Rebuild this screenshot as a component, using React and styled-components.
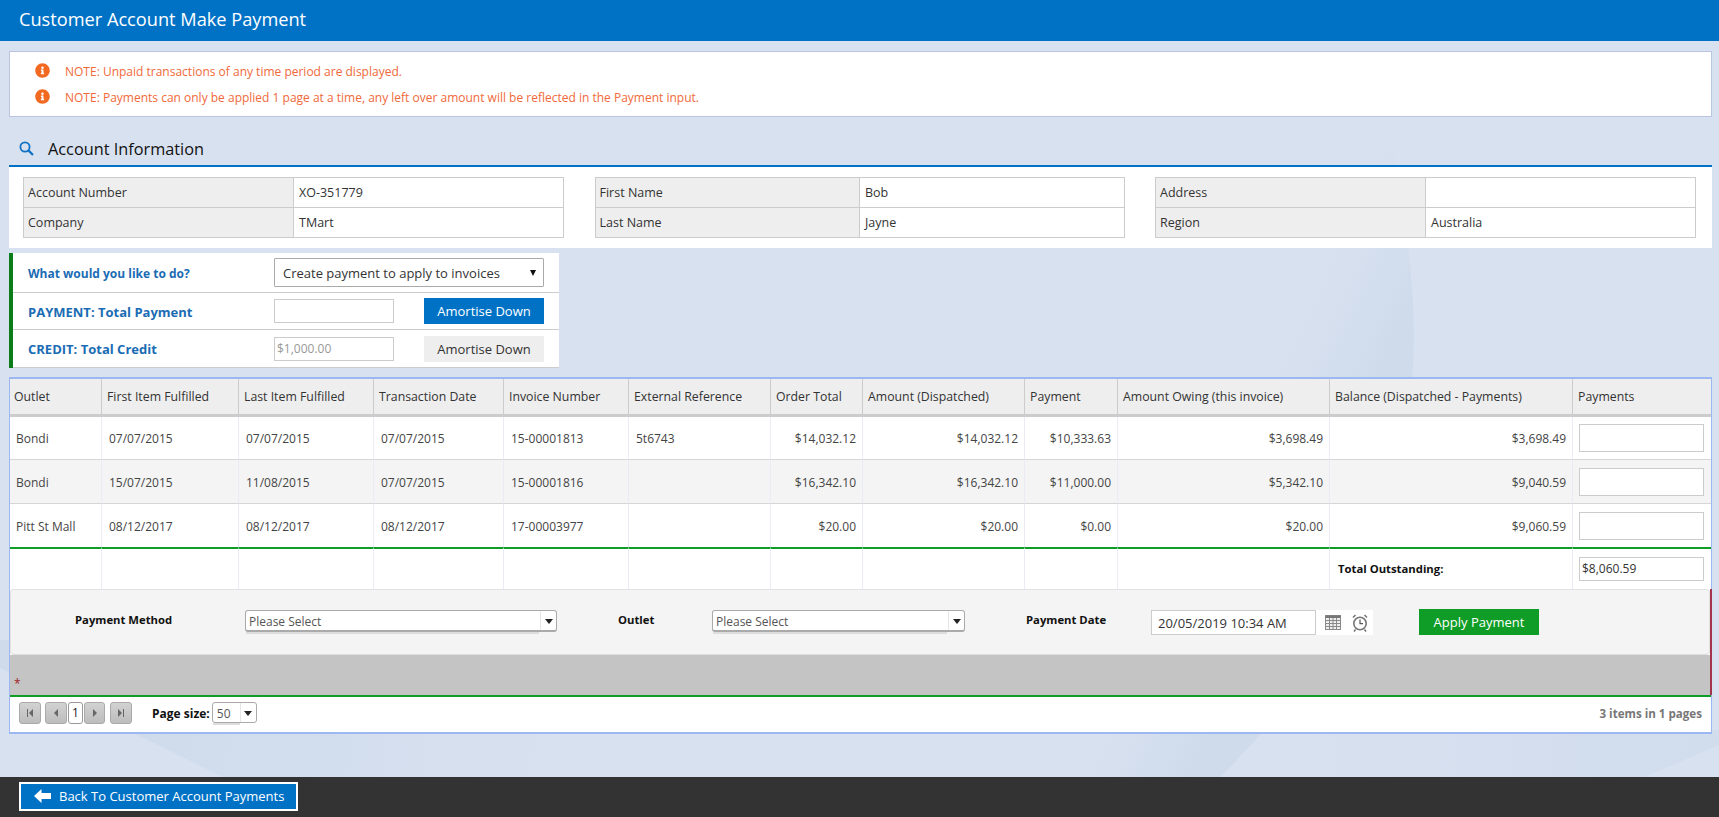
import React from "react";
import styled, { createGlobalStyle } from "styled-components";
import { FaInfoCircle } from "react-icons/fa";

const Global = createGlobalStyle`
  html, body { margin: 0; padding: 0; height: 100%; }
  body { font-family: "Open Sans", "Liberation Sans", sans-serif; font-size: 12px; color: #333; background: #d8e1f0; overflow: hidden; }
  * { box-sizing: border-box; }
`;

const Page = styled.div`position: relative; height: 817px; display: flex; flex-direction: column; isolation: isolate;`;
const Backdrop = styled.svg`position: absolute; left: 0; top: 0; z-index: -1;`;
const Header = styled.header`
  height: 41px; flex: none; background: #0072c6; color: #fff; font-size: 18.2px; line-height: 39px; padding-left: 19px;
`;
const Main = styled.main`flex: 1; padding: 10px 7px 0 9px; min-height: 0;`;

const Notes = styled.div`
  height: 66px; background: #fff; border: 1px solid #b9c5e2; padding: 6px 0 0 25px; display: flex; flex-direction: column;
`;
const Note = styled.div`
  height: 26px; display: flex; align-items: center; gap: 15px; color: #f0693a; font-size: 12px;
  svg { color: #f26a21; width: 15px; height: 15px; flex: none; position: relative; top: -1px; }
`;

const SectionHead = styled.div`
  height: 50px; padding: 20px 0 0 10px; border-bottom: 2px solid #0072c6; display: flex; align-items: flex-start; gap: 14px;
  font-size: 16.3px; line-height: 24px; color: #111;
  svg { margin-top: 4px; flex: none; }
`;
const InfoPanel = styled.section`
  height: 81px; background: #fff; padding: 10px 16px 0 14px; display: flex; justify-content: space-between;
`;
const InfoTable = styled.table`
  width: ${p => p.$w}px; height: 61px; border-collapse: collapse; table-layout: fixed; border: 1px solid #ccc;
  td { border: 1px solid #ccc; padding: 0 5px; height: 30px; font-size: 12.5px; color: #333; }
`;
const InfoLabel = styled.td`background: #eee; width: 50%; && { padding-left: 4px; }`;

const ActionPanel = styled.section`
  margin-top: 5px; width: 550px; background: #fff; border-left: 4px solid #0a7d1a; display: flex; flex-direction: column;
`;
const ActionRow = styled.div`
  height: ${p => p.$h}px; border-bottom: 1px solid #ccc; display: grid; grid-template-columns: 246px 150px 120px; align-items: center;
  padding-left: 15px;
`;
const ActionLabel = styled.div`padding-top: 1px; font-weight: 700; color: #1a6cb4; font-size: ${p => p.$size || 13}px;`;
const SelectWrap = styled.div`
  grid-column: 2 / span 2; position: relative; width: 270px; height: 29px;
  &::after { content: ""; position: absolute; right: 8px; top: 12px; border-left: 3px solid transparent; border-right: 3px solid transparent; border-top: 6px solid #111; }
`;
const NativeSelect = styled.select`
  appearance: none; width: 100%; height: 100%; background: #fff; border: 1px solid #aaa; border-radius: 1px;
  font: 13px "Open Sans", sans-serif; color: #333; padding: 0 8px;
`;
const TextInput = styled.input`
  width: ${p => p.$w || 120}px; height: ${p => p.$h || 24}px; border: 1px solid #ccc; background: #fff; padding: 0 ${p => p.$pad || 2}px;
  font: ${p => p.$size || 12}px "Open Sans", sans-serif; color: ${p => (p.$muted ? "#999" : "#333")}; outline: none;
  &::placeholder { color: #999; }
`;
const Amortise = styled.button`
  width: 120px; height: 26px; border: none; font: 13px "Open Sans", sans-serif; padding: 0;
  background: ${p => (p.$primary ? "#0072c6" : "#eee")}; color: ${p => (p.$primary ? "#fff" : "#333")};
`;

const Grid = styled.section`
  margin-top: 9px; background: #fff; border: 1px solid #9bb8f2; border-top-width: 2px; border-bottom-width: 2px;
`;
const DataTable = styled.table`
  width: 100%; table-layout: fixed; border-collapse: separate; border-spacing: 0;
`;
const Th = styled.th`
  height: 38px; background: #eee; border-bottom: 3px solid #ccc; border-right: 1px solid #ccc; padding: 0 4px 0 5px;
  font-weight: 400; font-size: 12.3px; color: #333; text-align: left; white-space: nowrap;
  &:first-child { padding-left: 4px; }
  &:last-child { border-right: none; }
`;
const Td = styled.td`
  height: ${p => p.$h}px; padding: ${p => (p.$top ? "1px" : "0")} 6px 0 7px; font-size: 12px; color: #444; white-space: nowrap;
  text-align: ${p => (p.$right ? "right" : "left")};
  background: ${p => (p.$alt ? "#f4f4f4" : "#fff")};
  border-right: 1px solid #e9ecf6;
  border-top: ${p => (p.$top ? "1px solid #d6d6d6" : "none")};
  &:first-child { padding-left: 6px; }
  &:last-child { border-right: none; padding-left: 6px; }
`;
const TotalTd = styled.td`
  height: 42px; border-top: 2px solid #0f9d27; border-right: 1px solid #e9ecf6; padding: 0 ${p => p.$pad || 8}px 1px; font-size: 11.3px; font-weight: 700; color: #111; white-space: nowrap;
  &:last-child { border-right: none; }
`;
const FormArea = styled.div`border-right: 2px solid #a5354c; margin-right: -1px;`;
const FormRow = styled.div`
  height: 66px; background: #f4f4f4; border-radius: 4px; border: 1px solid #e2e2e2; border-bottom-color: #ddd; padding-top: 20px;
  display: grid; grid-template-columns: 234px 312px 155px 253px 186px 222px 46px 120px; align-items: start;
`;
const FormLabel = styled.div`padding-left: ${p => p.$pad}px; font-weight: 700; font-size: 11.3px; line-height: 20px; color: #111;`;
const Kendo = styled.div`
  position: relative; height: 22px; background: #fff; border: 1px solid #aaa; border-bottom-width: 2px; border-radius: 3px;
  padding: 1px 3px 0; font-size: 12px; line-height: 19px; color: #555;
  &::before { content: ""; position: absolute; left: 0; right: ${p => p.$arrow}px; bottom: -4px; height: 2px; background: #ddd; }
`;
const KendoArrow = styled.span`
  position: absolute; right: 0; top: 0; bottom: 0; width: ${p => p.$w}px; border-left: 1px solid #e6e6e6;
  &::after { content: ""; position: absolute; left: 50%; margin-left: -4px; top: 8px; border-left: 4px solid transparent; border-right: 4px solid transparent; border-top: 5px solid #222; }
`;
const DateField = styled.div`display: flex; height: 25px; width: 222px; background: #fff;`;
const DateIcons = styled.div`display: flex; align-items: center; gap: 11px; padding-left: 9px;`;
const ApplyButton = styled.button`
  width: 120px; height: 26px; margin-top: -1px; border: none; background: #0f9d27; color: #fff; font: 13px "Open Sans", sans-serif; padding: 0;
`;
const GrayBand = styled.div`height: 40px; background: #c4c4c4; color: #a01f1f; font-size: 12px; line-height: 14px; padding: 22px 0 0 4px;`;
const Pager = styled.div`
  height: 37px; border-top: 2px solid #0f9d27; display: flex; align-items: center; padding: 0 9px 3px 9px;
`;
const PageBtn = styled.button`
  width: ${p => p.$w || 22}px; height: 22px; padding: 0; margin-right: ${p => p.$mr || 0}px; display: flex; align-items: center; justify-content: center;
  border: 1px solid #aaa; border-radius: 3px; background: linear-gradient(#d2d2d2, #bdbdbd);
`;
const PageNum = styled.span`
  width: 15px; height: 22px; margin-right: 1px; border: 1px solid #999; border-radius: 3px; background: #fff; color: #222; text-align: center; line-height: 20px; font-size: 12px;
`;
const PageSize = styled.span`margin-left: 20px; margin-right: 2px; font-weight: 700; font-size: 12px; color: #111;`;
const SizeSelect = styled(Kendo)`width: 45px; height: 21px; margin-top: -2px; border-width: 1px; padding: 1px 4px 0; &::before { right: 16px; bottom: -3px; }`;
const ItemCount = styled.span`margin-left: auto; font-weight: 700; color: #777; font-size: 11.6px;`;

const BottomBar = styled.footer`flex: none; height: 40px; background: #333; padding: 5px 0 0 19px;`;
const BackButton = styled.button`
  width: 279px; height: 29px; background: #0072c6; border: 2px solid #fff; color: #fff; display: flex; align-items: center; gap: 8px; padding: 0 0 1px 13px;
  font: 13px "Open Sans", sans-serif; white-space: nowrap;
`;

const widths = [92, 137, 135, 130, 125, 142, 92, 162, 93, 212, 243, 138];
const heads = ["Outlet", "First Item Fulfilled", "Last Item Fulfilled", "Transaction Date", "Invoice Number", "External Reference", "Order Total", "Amount (Dispatched)", "Payment", "Amount Owing (this invoice)", "Balance (Dispatched - Payments)", "Payments"];
const rows = [
  ["Bondi", "07/07/2015", "07/07/2015", "07/07/2015", "15-00001813", "5t6743", "$14,032.12", "$14,032.12", "$10,333.63", "$3,698.49", "$3,698.49"],
  ["Bondi", "15/07/2015", "11/08/2015", "07/07/2015", "15-00001816", "", "$16,342.10", "$16,342.10", "$11,000.00", "$5,342.10", "$9,040.59"],
  ["Pitt St Mall", "08/12/2017", "08/12/2017", "08/12/2017", "17-00003977", "", "$20.00", "$20.00", "$0.00", "$20.00", "$9,060.59"],
];
const rowH = [42, 44, 44];

const Tri = ({ d, bar }) => (
  <svg width="12" height="12" viewBox="0 0 12 12" fill="#666">
    {d === "l" ? <path d={bar ? "M9 2v8L5 6z" : "M8 2v8L4 6z"} /> : <path d={bar ? "M3 2v8l4-4z" : "M4 2v8l4-4z"} />}
    {bar && <rect x={d === "l" ? 3 : 8} y="2" width="1" height="8" />}
  </svg>
);

const SearchIcon = () => (
  <svg width="15" height="15" viewBox="0 0 15 15" fill="none" stroke="#0f72c4" strokeWidth="1.8">
    <circle cx="6" cy="6" r="4.6" /><path d="M9.4 9.4L14 14" strokeWidth="2.2" />
  </svg>
);
const CalendarIcon = () => (
  <svg width="16" height="15" viewBox="0 0 16 15" fill="none" stroke="#8a8a8a">
    <rect x=".5" y=".5" width="15" height="14" fill="#eee" /><rect x=".5" y=".5" width="15" height="2.5" fill="#777" stroke="none" />
    <path d="M.5 5.5h15M.5 8.5h15M.5 11.5h15M4.5 3v11M8 3v11M11.5 3v11" />
  </svg>
);
const AlarmIcon = () => (
  <svg width="16" height="18" viewBox="0 0 16 18" fill="none" stroke="#777" strokeWidth="1.2">
    <circle cx="8" cy="9.5" r="6.2" fill="#fff" strokeWidth="1.6" />
    <path d="M8 5.5v4.2h3" stroke="#555" />
    <path d="M1 3.5L3.5 1M15 3.5L12.5 1M3.5 15.5l-1.5 2M12.5 15.5l1.5 2" strokeWidth="1.6" />
  </svg>
);
const BackArrow = () => (
  <svg width="17" height="14" viewBox="0 0 17 14" fill="#fff"><path d="M0 7l7.5-7v4H17v6H7.5v4z" /></svg>
);

export default function App() {
  return (
    <Page>
      <Global />
      <Backdrop width="1719" height="817" viewBox="0 0 1719 817">
        <defs>
          <linearGradient id="fan" gradientUnits="userSpaceOnUse" x1="1310" y1="300" x2="1395" y2="340">
            <stop offset="0" stopColor="#d8e1f0" /><stop offset="1" stopColor="#cfdbeb" />
          </linearGradient>
          <linearGradient id="wedge" gradientUnits="userSpaceOnUse" x1="130" y1="740" x2="560" y2="770">
            <stop offset="0" stopColor="#cfdbeb" /><stop offset="1" stopColor="#d8e1f0" />
          </linearGradient>
          <linearGradient id="corner" gradientUnits="userSpaceOnUse" x1="1300" y1="760" x2="1700" y2="760">
            <stop offset="0" stopColor="#d8e1f0" /><stop offset="1" stopColor="#d1dcec" />
          </linearGradient>
        </defs>
        <path d="M1370 41C1410 220 1425 330 1405 430C1380 560 1320 680 1220 777H1000L1200 41z" fill="url(#fan)" />
        <path d="M0 668L223 777H600V640H0z" fill="url(#wedge)" />
        <path d="M1300 777H1645L1719 745V730H1300z" fill="url(#corner)" />
      </Backdrop>

      <Header>Customer Account Make Payment</Header>
      <Main>
        <Notes>
          <Note><FaInfoCircle />NOTE: Unpaid transactions of any time period are displayed.</Note>
          <Note><FaInfoCircle />NOTE: Payments can only be applied 1 page at a time, any left over amount will be reflected in the Payment input.</Note>
        </Notes>
        <SectionHead><SearchIcon />Account Information</SectionHead>
        <InfoPanel>
          <InfoTable $w={541}><tbody>
            <tr><InfoLabel>Account Number</InfoLabel><td>XO-351779</td></tr>
            <tr><InfoLabel>Company</InfoLabel><td>TMart</td></tr>
          </tbody></InfoTable>
          <InfoTable $w={530}><tbody>
            <tr><InfoLabel>First Name</InfoLabel><td>Bob</td></tr>
            <tr><InfoLabel>Last Name</InfoLabel><td>Jayne</td></tr>
          </tbody></InfoTable>
          <InfoTable $w={541}><tbody>
            <tr><InfoLabel>Address</InfoLabel><td></td></tr>
            <tr><InfoLabel>Region</InfoLabel><td>Australia</td></tr>
          </tbody></InfoTable>
        </InfoPanel>

        <ActionPanel>
          <ActionRow $h={40}>
            <ActionLabel $size={12}>What would you like to do?</ActionLabel>
            <SelectWrap>
              <NativeSelect defaultValue="a"><option value="a">Create payment to apply to invoices</option></NativeSelect>
            </SelectWrap>
          </ActionRow>
          <ActionRow $h={37}>
            <ActionLabel>PAYMENT: Total Payment</ActionLabel>
            <TextInput />
            <Amortise $primary>Amortise Down</Amortise>
          </ActionRow>
          <ActionRow $h={38}>
            <ActionLabel>CREDIT: Total Credit</ActionLabel>
            <TextInput $muted readOnly defaultValue="$1,000.00" />
            <Amortise>Amortise Down</Amortise>
          </ActionRow>
        </ActionPanel>

        <Grid>
          <DataTable>
            <colgroup>{widths.map((w, i) => <col key={i} width={w} />)}</colgroup>
            <thead><tr>{heads.map(h => <Th key={h}>{h}</Th>)}</tr></thead>
            <tbody>
              {rows.map((r, i) => (
                <tr key={i}>
                  {r.map((c, j) => <Td key={j} $h={rowH[i]} $top={i > 0} $alt={i === 1} $right={j >= 6}>{c}</Td>)}
                  <Td $h={rowH[i]} $top={i > 0} $alt={i === 1}><TextInput $w={125} $h={28} /></Td>
                </tr>
              ))}
              <tr>
                {Array.from({ length: 10 }, (_, i) => <TotalTd key={i} />)}
                <TotalTd>Total Outstanding:</TotalTd>
                <TotalTd $pad={6}><TextInput $w={125} readOnly defaultValue="$8,060.59" /></TotalTd>
              </tr>
            </tbody>
          </DataTable>
          <FormArea>
            <FormRow>
              <FormLabel $pad={64}>Payment Method</FormLabel>
              <Kendo $arrow={17}>Please Select<KendoArrow $w={16} /></Kendo>
              <FormLabel $pad={61}>Outlet</FormLabel>
              <Kendo $arrow={17}>Please Select<KendoArrow $w={16} /></Kendo>
              <FormLabel $pad={61}>Payment Date</FormLabel>
              <DateField>
                <TextInput $w={165} $h={25} $size={13} $pad={6} readOnly defaultValue="20/05/2019 10:34 AM" />
                <DateIcons><CalendarIcon /><AlarmIcon /></DateIcons>
              </DateField>
              <span />
              <ApplyButton>Apply Payment</ApplyButton>
            </FormRow>
            <GrayBand>*</GrayBand>
          </FormArea>
          <Pager>
            <PageBtn $mr={4}><Tri d="l" bar /></PageBtn>
            <PageBtn $mr={1}><Tri d="l" /></PageBtn>
            <PageNum>1</PageNum>
            <PageBtn $w={21} $mr={5}><Tri d="r" /></PageBtn>
            <PageBtn><Tri d="r" bar /></PageBtn>
            <PageSize>Page size:</PageSize>
            <SizeSelect $arrow={16}>50<KendoArrow $w={16} /></SizeSelect>
            <ItemCount>3 items in 1 pages</ItemCount>
          </Pager>
        </Grid>
      </Main>
      <BottomBar>
        <BackButton><BackArrow />Back To Customer Account Payments</BackButton>
      </BottomBar>
    </Page>
  );
}
